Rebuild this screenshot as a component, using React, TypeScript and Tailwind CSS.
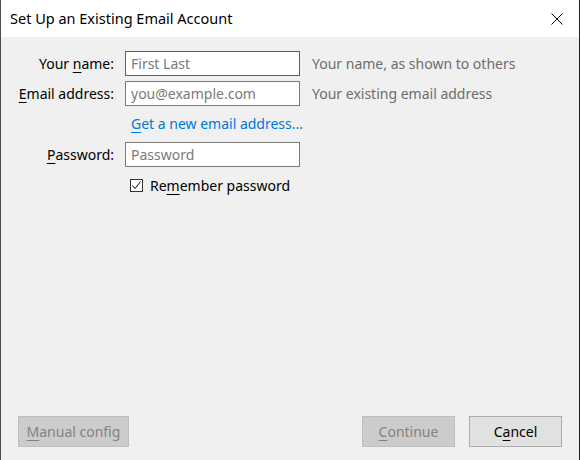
import React from "react";

const font = { fontFamily: '"Segoe UI", "Noto Sans", "Open Sans", sans-serif' };

function U({ children }: { children: React.ReactNode }) {
  return <span className="underline underline-offset-[3px] decoration-1">{children}</span>;
}

function Field({
  label,
  placeholder,
  hint,
  focused,
}: {
  label: React.ReactNode;
  placeholder: string;
  hint?: string;
  focused?: boolean;
}) {
  return (
    <div className="flex items-center">
      <label className="w-[113px] shrink-0 text-right text-[14px] text-black">{label}</label>
      <input
        placeholder={placeholder}
        className={`ml-[11px] h-[25px] w-[175px] shrink-0 bg-white px-[5px] text-[14px] outline-none placeholder:text-[#7a7a7a] ${
          focused ? "border border-[#0078d7]" : "border border-[#7a7a7a]"
        }`}
      />
      {hint && <span className="ml-[12px] text-[14px] text-[#6d6d6d]">{hint}</span>}
    </div>
  );
}

export default function App() {
  return (
    <div
      style={font}
      className="flex h-[460px] w-[580px] flex-col border-l border-r border-l-[#4d4d4d] border-r-[#202020] bg-[#f0f0f0]"
    >
      <div className="flex h-[37px] shrink-0 items-center justify-between bg-white pl-[9px] pr-[16px]">
        <span className="text-[14.5px] text-black">Set Up an Existing Email Account</span>
        <svg width="12" height="12" viewBox="0 0 12 12" className="mt-[1px]">
          <path d="M0.5 0.5 L11.5 11.5 M11.5 0.5 L0.5 11.5" stroke="#000" strokeWidth="1" />
        </svg>
      </div>

      <div className="flex flex-1 flex-col pt-[14px]">
        <Field
          label={
            <>
              Your <U>n</U>ame:
            </>
          }
          placeholder="First Last"
          hint="Your name, as shown to others"
          focused
        />
        <div className="mt-[5px]">
          <Field
            label={
              <>
                <U>E</U>mail address:
              </>
            }
            placeholder="you@example.com"
            hint="Your existing email address"
          />
        </div>
        <a className="ml-[130px] mt-[7px] h-[20px] w-fit text-[14px] text-[#0078d7]" href="#">
          <U>G</U>et a new email address...
        </a>
        <div className="mt-[9px]">
          <Field
            label={
              <>
                <U>P</U>assword:
              </>
            }
            placeholder="Password"
          />
        </div>
        <label className="ml-[129px] mt-[8px] flex items-center gap-[7px] text-[14px] text-black">
          <span className="flex h-[13px] w-[13px] items-center justify-center border border-[#333] bg-white">
            <svg width="11" height="11" viewBox="0 0 11 11">
              <path d="M1.5 5.5 L4 8.5 L9.5 1.5" fill="none" stroke="#000" strokeWidth="1" />
            </svg>
          </span>
          <span>
            Re<U>m</U>ember password
          </span>
        </label>

        <div className="mt-auto flex items-center px-[17px] pb-[13px]">
          <button className="h-[31px] w-[111px] border border-[#bfbfbf] bg-[#cccccc] text-[14px] text-[#838383]">
            <U>M</U>anual config
          </button>
          <div className="ml-auto flex gap-[14px]">
            <button className="h-[31px] w-[93px] border border-[#bfbfbf] bg-[#cccccc] text-[14px] text-[#838383]">
              <U>C</U>ontinue
            </button>
            <button className="h-[31px] w-[93px] border border-[#adadad] bg-[#e1e1e1] text-[14px] text-black">
              C<U>a</U>ncel
            </button>
          </div>
        </div>
      </div>
    </div>
  );
}
